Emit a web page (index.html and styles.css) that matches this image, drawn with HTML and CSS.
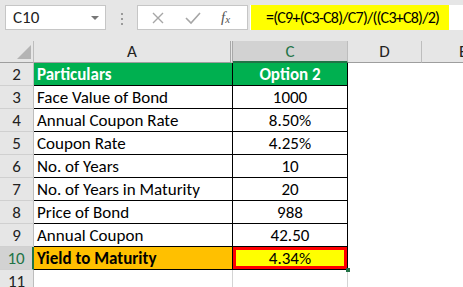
FILE: index.html
```html
<!DOCTYPE html>
<html>
<head>
    <title>Yield to Maturity</title>
    <link rel="stylesheet" href="styles.css">
</head>
<body>
    <div class="toolbar">
        <div class="name-box">
            <span>C10</span>
            <span class="drop"></span>
        </div>
        <div class="dots"><i></i><i></i><i></i></div>
        <div class="fx-box">
            <svg width="14" height="14" viewBox="0 0 14 14"><path d="M2 2 L12 12 M12 2 L2 12" stroke="#a6a6a6" stroke-width="1.4" fill="none"/></svg>
            <svg width="16" height="14" viewBox="0 0 16 14"><path d="M1 7 L6 12 L15 2" stroke="#a6a6a6" stroke-width="1.6" fill="none"/></svg>
            <span class="fx">f<sub>x</sub></span>
        </div>
        <div class="formula">
            <span class="mark">=(C9+(C3-C8)/C7)/((C3+C8)/2)</span>
        </div>
    </div>

    <div class="sheet">
        <div class="corner"></div>
        <div class="col-head hidden-b">A</div>
        <div class="col-head active">C</div>
        <div class="col-head">D</div>
        <div class="col-head last">E</div>

        <div class="row-head">2</div>
        <div class="cell head left">Particulars</div>
        <div class="cell head">Option 2</div>
        <div class="cell blank"></div>
        <div class="cell blank"></div>

        <div class="row-head">3</div>
        <div class="cell left">Face Value of Bond</div>
        <div class="cell">1000</div>
        <div class="cell blank"></div>
        <div class="cell blank"></div>

        <div class="row-head">4</div>
        <div class="cell left">Annual Coupon Rate</div>
        <div class="cell">8.50%</div>
        <div class="cell blank"></div>
        <div class="cell blank"></div>

        <div class="row-head">5</div>
        <div class="cell left">Coupon Rate</div>
        <div class="cell">4.25%</div>
        <div class="cell blank"></div>
        <div class="cell blank"></div>

        <div class="row-head">6</div>
        <div class="cell left">No. of Years</div>
        <div class="cell">10</div>
        <div class="cell blank"></div>
        <div class="cell blank"></div>

        <div class="row-head">7</div>
        <div class="cell left">No. of Years in Maturity</div>
        <div class="cell">20</div>
        <div class="cell blank"></div>
        <div class="cell blank"></div>

        <div class="row-head">8</div>
        <div class="cell left">Price of Bond</div>
        <div class="cell">988</div>
        <div class="cell blank"></div>
        <div class="cell blank"></div>

        <div class="row-head">9</div>
        <div class="cell left">Annual Coupon</div>
        <div class="cell">42.50</div>
        <div class="cell blank"></div>
        <div class="cell blank"></div>

        <div class="row-head active">10</div>
        <div class="cell left total">Yield to Maturity</div>
        <div class="cell result">4.34%</div>
        <div class="cell blank"></div>
        <div class="cell blank"></div>

        <div class="row-head">11</div>
        <div class="cell empty"></div>
        <div class="cell empty"></div>
        <div class="cell blank"></div>
        <div class="cell blank"></div>
    </div>
</body>
</html>
```

FILE: styles.css
```css
body {
    margin: 0;
    width: 463px;
    height: 287px;
    overflow: hidden;
    background: #fff;
    font-family: Calibri, Carlito, Lato, sans-serif;
    color: #000;
}

.toolbar {
    display: flex;
    align-items: flex-start;
    height: 41px;
    padding: 5px 0 0 5px;
    box-sizing: border-box;
    background: #e6e6e6;
}

.name-box {
    display: flex;
    align-items: center;
    justify-content: space-between;
    width: 101px;
    height: 25px;
    padding: 0 6px 0 7px;
    box-sizing: border-box;
    background: #fff;
    border: 1px solid #c6c6c6;
    font-size: 17px;
    color: #222;
}

.drop {
    width: 0;
    height: 0;
    border-left: 4px solid transparent;
    border-right: 4px solid transparent;
    border-top: 4px solid #777;
}

.dots {
    display: flex;
    flex-direction: column;
    gap: 3px;
    width: 31px;
    align-items: center;
    padding-top: 8px;
}

.dots i {
    width: 2px;
    height: 2px;
    background: #9a9a9a;
}

.fx-box {
    display: flex;
    align-items: center;
    gap: 20px;
    width: 111px;
    height: 25px;
    padding-left: 13px;
    box-sizing: border-box;
    background: #fff;
    border: 1px solid #c6c6c6;
}

.fx {
    font-family: "Liberation Serif", serif;
    font-style: italic;
    font-size: 15px;
    color: #555;
}

.fx sub {
    font-size: 11px;
    vertical-align: -1px;
}

.formula {
    flex: 1;
    height: 25px;
    margin-left: 2px;
    padding-left: 1px;
    background: #fff;
}

.mark {
    display: inline-block;
    width: 198px;
    height: 25px;
    line-height: 25px;
    padding-left: 15px;
    box-sizing: border-box;
    background: #ffff00;
    font-size: 16px;
    letter-spacing: -0.75px;
    white-space: nowrap;
    overflow: hidden;
}

.sheet {
    display: grid;
    grid-template-columns: 34px 199px 115px 74px 41px;
    grid-template-rows: 22px repeat(10, 23px);
    font-size: 17px;
}

.corner {
    position: relative;
    background: #e6e6e6;
    border-right: 1px solid #bdbdbd;
    border-bottom: 1px solid #9e9e9e;
}

.corner::after {
    content: "";
    position: absolute;
    right: 2px;
    bottom: 3px;
    border-left: 14px solid transparent;
    border-bottom: 14px solid #b4b4b4;
}

.col-head {
    background: #e6e6e6;
    border-right: 1px solid #bdbdbd;
    border-bottom: 1px solid #9e9e9e;
    text-align: center;
    line-height: 22px;
    color: #222;
}

.col-head.hidden-b {
    border-right: 3px double #a8a8a8;
}

.col-head.active {
    background: #d2d2d2;
    color: #217346;
    border-bottom: 2px solid #217346;
}

.col-head.last {
    text-align: left;
    padding-left: 37px;
    border-right: none;
}

.row-head {
    background: #e6e6e6;
    border-right: 1px solid #bdbdbd;
    border-bottom: 1px solid #d0d0d0;
    text-align: center;
    line-height: 23px;
    color: #222;
}

.row-head.active {
    background: #d2d2d2;
    color: #217346;
    border-right: 2px solid #217346;
}

.cell {
    border-right: 1px solid #000;
    border-bottom: 1px solid #000;
    text-align: center;
    line-height: 24px;
    white-space: nowrap;
    overflow: hidden;
}

.cell.left {
    text-align: left;
    padding-left: 3px;
}

.cell.head {
    background: #00b050;
    color: #fff;
    font-weight: bold;
}

.cell.total {
    background: #ffc000;
    font-weight: bold;
}

.cell.result {
    position: relative;
    overflow: visible;
    background: #ffff00;
    box-shadow: inset 0 0 0 3px #ff0000;
}

.cell.result::after {
    content: "";
    position: absolute;
    right: -3px;
    bottom: -3px;
    width: 4px;
    height: 4px;
    background: #217346;
}

.cell.blank {
    border: none;
}

.cell.empty {
    border-right: 1px solid #d4d4d4;
    border-bottom: 1px solid #d4d4d4;
}
```
